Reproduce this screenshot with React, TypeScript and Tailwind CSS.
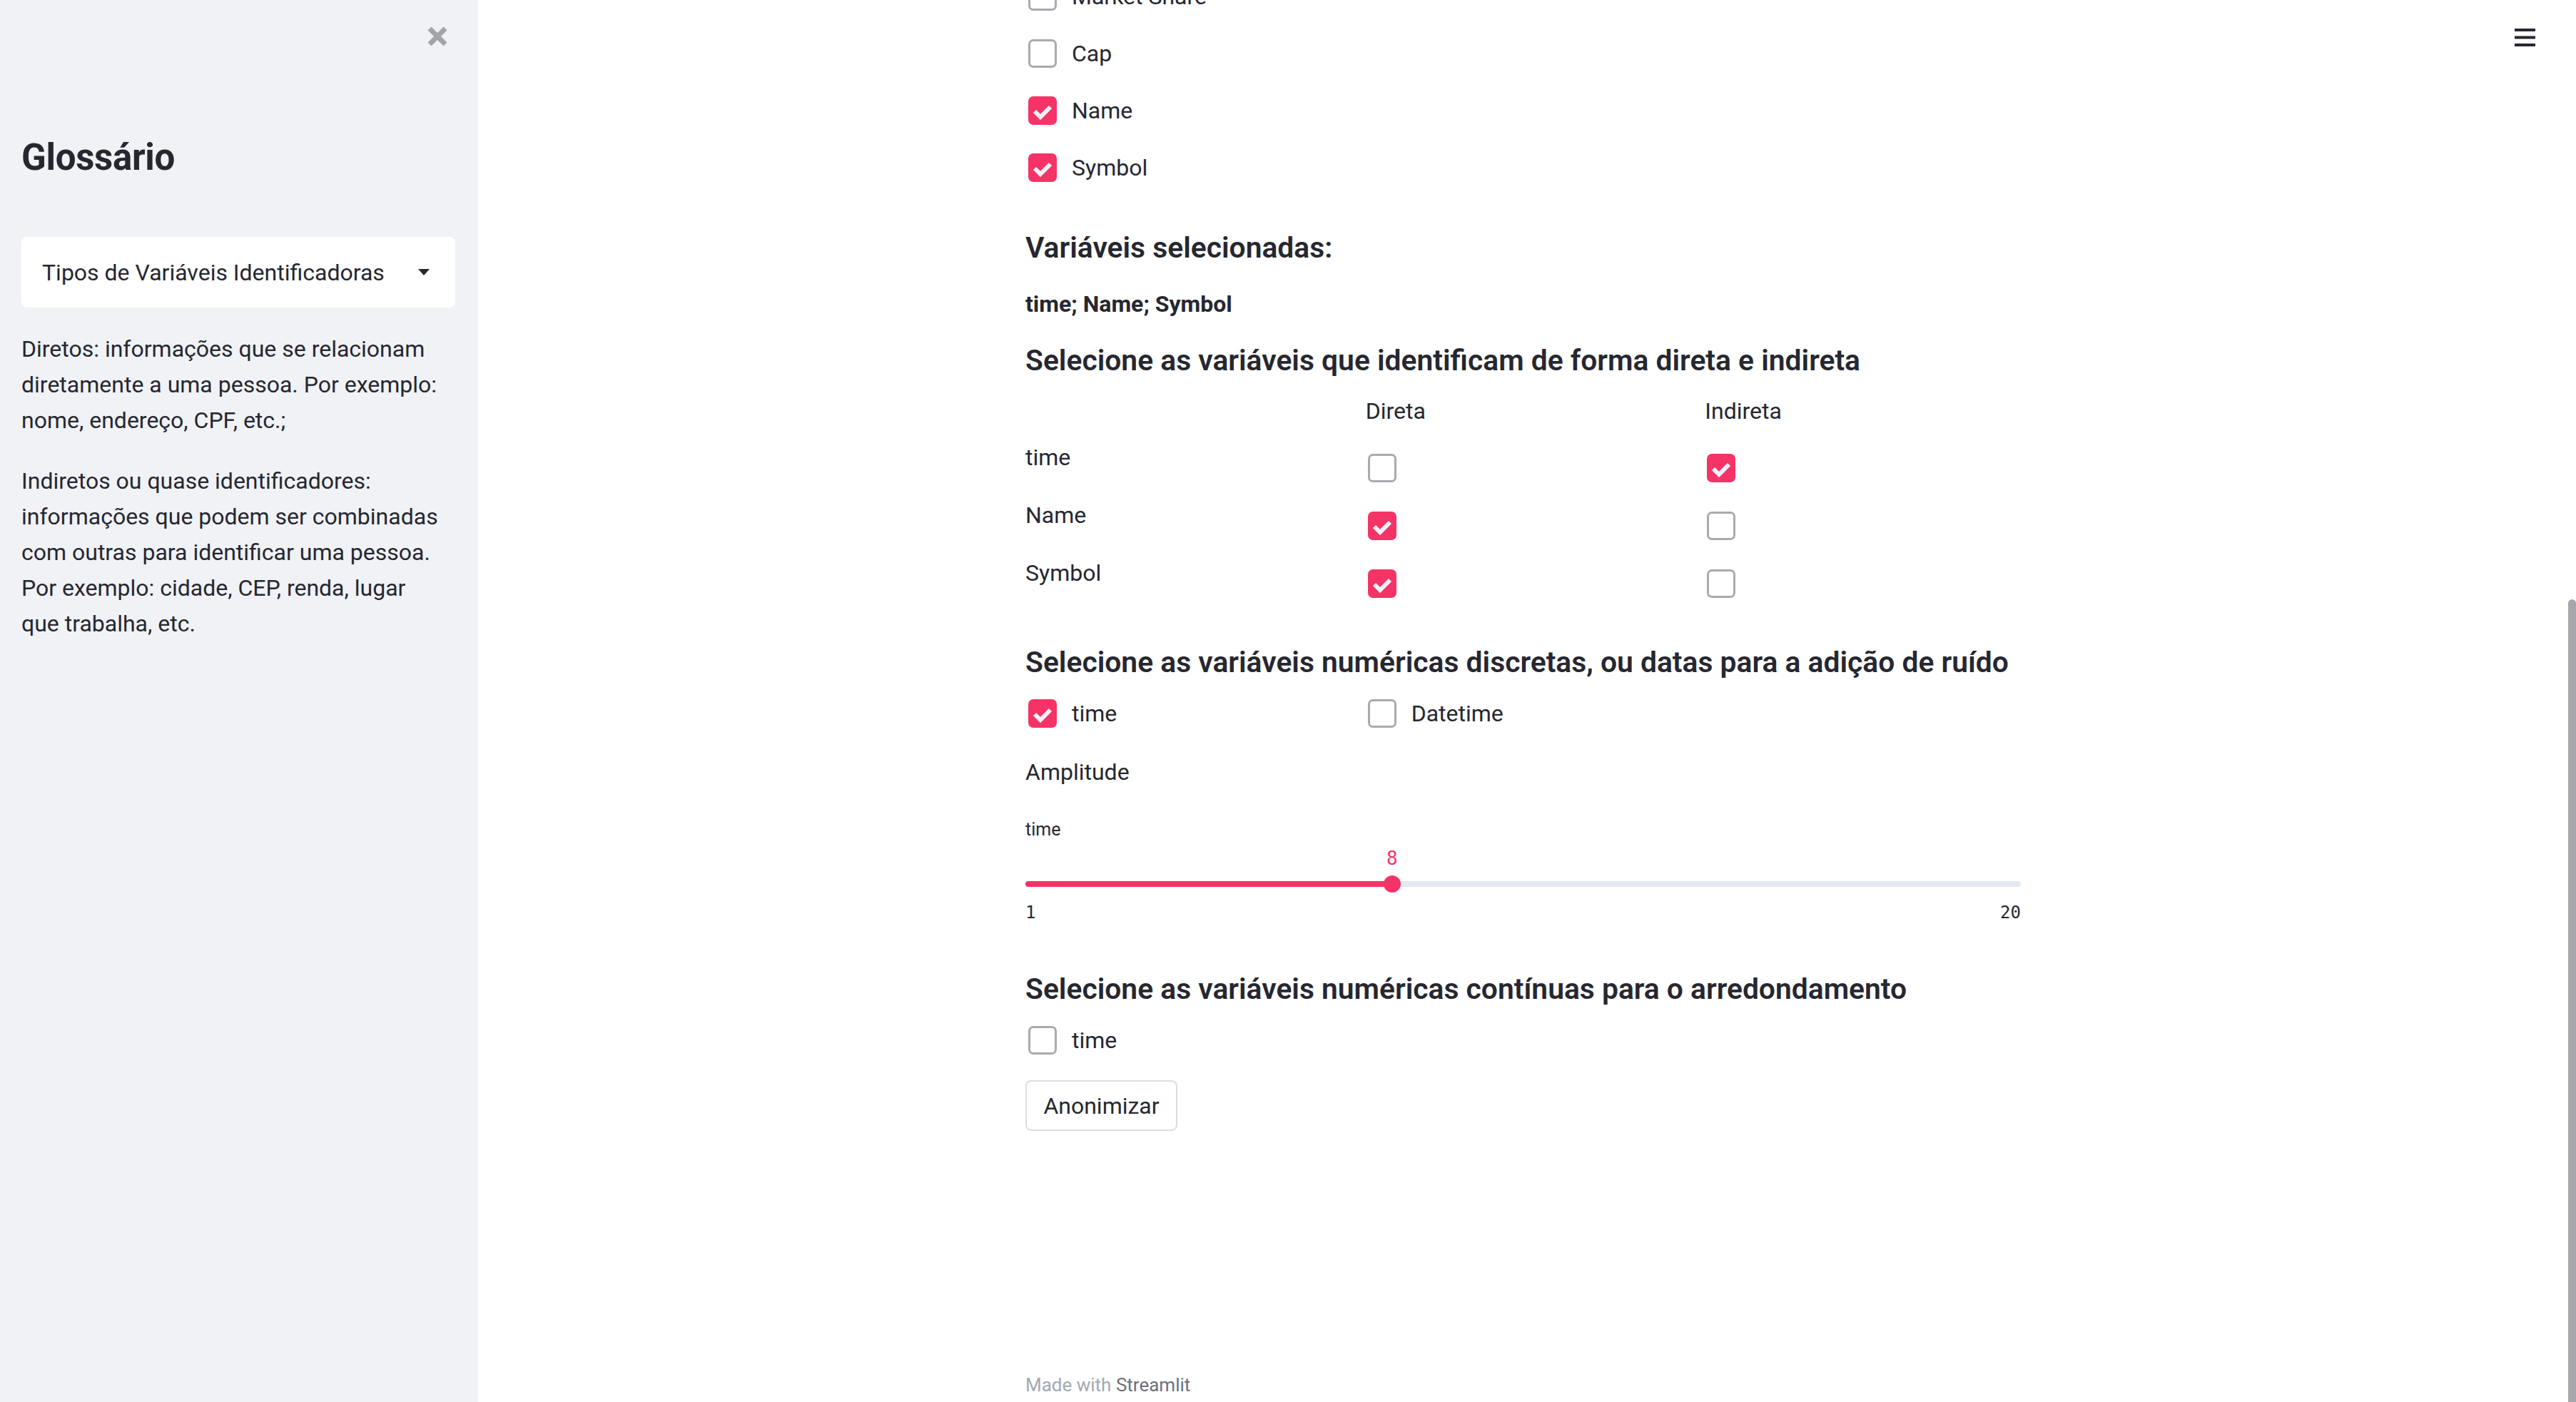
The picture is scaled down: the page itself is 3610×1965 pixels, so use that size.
import React from "react";

function Box({ checked }: { checked: boolean }) {
  if (checked) {
    return (
      <span className="flex h-[40px] w-[40px] shrink-0 items-center justify-center rounded-[7px] bg-[#f63366]">
        <svg width="40" height="40" viewBox="0 0 40 40">
          <path d="M9 21 L17 29 L31 15" fill="none" stroke="#f0f2f6" strokeWidth="6" strokeLinejoin="miter" />
        </svg>
      </span>
    );
  }
  return <span className="block h-[40px] w-[40px] shrink-0 rounded-[7px] border-[3px] border-[#a9aab0] bg-white" />;
}

function CheckRow({ label, checked, className = "" }: { label: string; checked: boolean; className?: string }) {
  return (
    <div className={"flex h-[40px] items-center gap-[21px] pl-[4px] " + className}>
      <Box checked={checked} />
      <span className="text-[32px] leading-[40px]">{label}</span>
    </div>
  );
}

const rows = [
  { label: "time", d: false, i: true },
  { label: "Name", d: true, i: false },
  { label: "Symbol", d: true, i: false },
];

export default function App() {
  const pct = ((8 - 1) / (20 - 1)) * 100;
  return (
    <div className="flex h-[1965px] w-full overflow-hidden bg-white font-[Roboto,'Liberation_Sans',sans-serif] text-[#262730]">
      {/* Sidebar */}
      <aside className="relative w-[670px] shrink-0 bg-[#f0f2f6] pl-[30px] pr-[32px] pt-[191px]">
        <svg className="absolute left-[599px] top-[37px]" width="28" height="28" viewBox="0 0 28 28">
          <path d="M3 3 L25 25 M25 3 L3 25" stroke="#a3a4aa" strokeWidth="7" fill="none" />
        </svg>
        <h2 className="text-[51px] font-bold leading-[60px] tracking-[-0.3px]">Glossário</h2>
        <div className="mt-[81px] flex h-[99px] items-center justify-between rounded-[8px] bg-white pl-[29px] pr-[36px]">
          <span className="text-[32px] leading-[40px]">Tipos de Variáveis Identificadoras</span>
          <svg width="16" height="9" viewBox="0 0 16 9">
            <path d="M0 0 L16 0 L8 9 Z" fill="#262730" />
          </svg>
        </div>
        <p className="mt-[33px] text-[32px] leading-[50px]">
          Diretos: informações que se relacionam
          <br />
          diretamente a uma pessoa. Por exemplo:
          <br />
          nome, endereço, CPF, etc.;
        </p>
        <p className="mt-[35px] text-[32px] leading-[50px]">
          Indiretos ou quase identificadores:
          <br />
          informações que podem ser combinadas
          <br />
          com outras para identificar uma pessoa.
          <br />
          Por exemplo: cidade, CEP, renda, lugar
          <br />
          que trabalha, etc.
        </p>
      </aside>

      {/* Main */}
      <main className="relative flex-1">
        <svg className="absolute right-[46px] top-[40px]" width="29" height="25" viewBox="0 0 29 25">
          <rect x="0" y="0" width="29" height="4" fill="#262730" />
          <rect x="0" y="10.5" width="29" height="4" fill="#262730" />
          <rect x="0" y="21" width="29" height="4" fill="#262730" />
        </svg>

        <div className="mx-auto flex w-[1395px] flex-col">
          <CheckRow label="Market Share" checked={false} className="-mt-[25px]" />
          <CheckRow label="Cap" checked={false} className="mt-[40px]" />
          <CheckRow label="Name" checked={true} className="mt-[40px]" />
          <CheckRow label="Symbol" checked={true} className="mt-[40px]" />

          <h3 className="mt-[68px] text-[40.8px] font-semibold leading-[49px]">Variáveis selecionadas:</h3>
          <p className="mt-[29px] text-[32px] font-bold leading-[50px]">time; Name; Symbol</p>

          <h3 className="mt-[30px] text-[40.8px] font-semibold leading-[49px]">
            Selecione as variáveis que identificam de forma direta e indireta
          </h3>

          <div className="mt-[21px] grid grid-cols-3 gap-x-[32px] text-[32px] leading-[50px]">
            <div />
            <div className="pl-[1px]">Direta</div>
            <div className="pl-[1px]">Indireta</div>
          </div>

          <div className="mt-[15px] flex flex-col">
            {rows.map((r) => (
              <div key={r.label} className="grid h-[81px] grid-cols-3 gap-x-[32px]">
                <div className="text-[32px] leading-[50px]">{r.label}</div>
                <div className="pl-[4px] pt-[20px]">
                  <Box checked={r.d} />
                </div>
                <div className="pl-[4px] pt-[20px]">
                  <Box checked={r.i} />
                </div>
              </div>
            ))}
          </div>

          <h3 className="mt-[45px] text-[40.8px] font-semibold leading-[49px]">
            Selecione as variáveis numéricas discretas, ou datas para a adição de ruído
          </h3>

          <div className="mt-[27px] grid grid-cols-3 gap-x-[32px]">
            <CheckRow label="time" checked={true} />
            <CheckRow label="Datetime" checked={false} />
          </div>

          <p className="mt-[37px] text-[32px] leading-[50px]">Amplitude</p>

          <p className="mt-[41px] text-[25px] leading-[30px]">time</p>

          <div className="relative mt-[10px] pt-[39px]">
            <span
              className="absolute top-0 -translate-x-1/2 font-['DejaVu_Sans_Mono',monospace] text-[26px] leading-[30px] text-[#f63366]"
              style={{ left: `${pct}%` }}
            >
              8
            </span>
            <div className="flex h-[24px] items-center">
              <div className="relative h-[8px] w-full rounded-full bg-[#e4e8ef]">
                <div className="absolute left-0 top-0 h-[8px] rounded-full bg-[#f63366]" style={{ width: `${pct}%` }} />
                <div
                  className="absolute top-1/2 h-[24px] w-[24px] -translate-x-1/2 -translate-y-1/2 rounded-full bg-[#f63366]"
                  style={{ left: `${pct}%` }}
                />
              </div>
            </div>
            <div className="mt-[13px] flex justify-between font-['DejaVu_Sans_Mono',monospace] text-[24px] leading-[30px]">
              <span>1</span>
              <span>20</span>
            </div>
          </div>

          <h3 className="mt-[68px] text-[40.8px] font-semibold leading-[49px]">
            Selecione as variáveis numéricas contínuas para o arredondamento
          </h3>

          <CheckRow label="time" checked={false} className="mt-[27px]" />

          <button className="mt-[36px] flex h-[71px] w-[213px] items-center justify-center rounded-[8px] border-2 border-[#dcdde0] bg-white text-[32px] leading-[40px] text-[#262730]">
            Anonimizar
          </button>

          <p className="mt-[341px] text-[26px] leading-[30px] text-[#a3a8b4]">
            Made with <span className="text-[#6b6f7b]">Streamlit</span>
          </p>
        </div>
      </main>

      {/* Scrollbar */}
      <div className="flex w-[11px] shrink-0 flex-col bg-white pt-[840px]">
        <div className="flex-1 rounded-t-[6px] bg-[#a6a7ab]" />
      </div>
    </div>
  );
}
